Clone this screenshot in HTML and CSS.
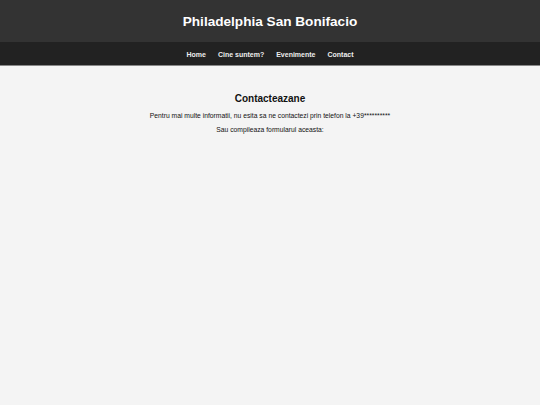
FILE: index.html
```html
<!DOCTYPE html>
<html>
<head>
<meta charset="utf-8">
<link rel="stylesheet" href="styles.css">
</head>
<body>
<header class="site-header">
  <h1 class="site-title">Philadelphia San Bonifacio</h1>
</header>
<nav class="site-nav">
  <a href="#">Home</a>
  <a href="#">Cine suntem?</a>
  <a href="#">Evenimente</a>
  <a href="#">Contact</a>
</nav>
<main class="content">
  <h2 class="heading">Contacteazane</h2>
  <p class="text">Pentru mai multe informatii, nu esita sa ne contactezi prin telefon la +39**********</p>
  <p class="text">Sau compileaza formularul aceasta:</p>
</main>
</body>
</html>
```
FILE: styles.css
```css
html, body {
  margin: 0;
  padding: 0;
  background: #f4f4f4;
  font-family: "Liberation Sans", Arial, sans-serif;
  height: 100%;
}
.site-header {
  background: #333;
  height: 42px;
  display: flex;
  align-items: center;
  justify-content: center;
}
.site-title {
  margin: 0;
  color: #fff;
  font-size: 13.6px;
  font-weight: bold;
}
.site-nav {
  background: #222;
  height: 22px;
  padding-top: 1px;
  border-bottom: 1px solid #888;
  display: flex;
  align-items: center;
  justify-content: center;
  gap: 12px;
}
.site-nav a {
  color: #eee;
  text-decoration: none;
  font-size: 7px;
  font-weight: bold;
}
.content {
  text-align: center;
  padding-top: 27px;
}
.heading {
  margin: 0 0 8px;
  font-size: 10px;
  font-weight: bold;
  color: #111;
}
.text {
  margin: 0 0 6px;
  font-size: 6.75px;
  color: #111;
  line-height: 8px;
}
```
